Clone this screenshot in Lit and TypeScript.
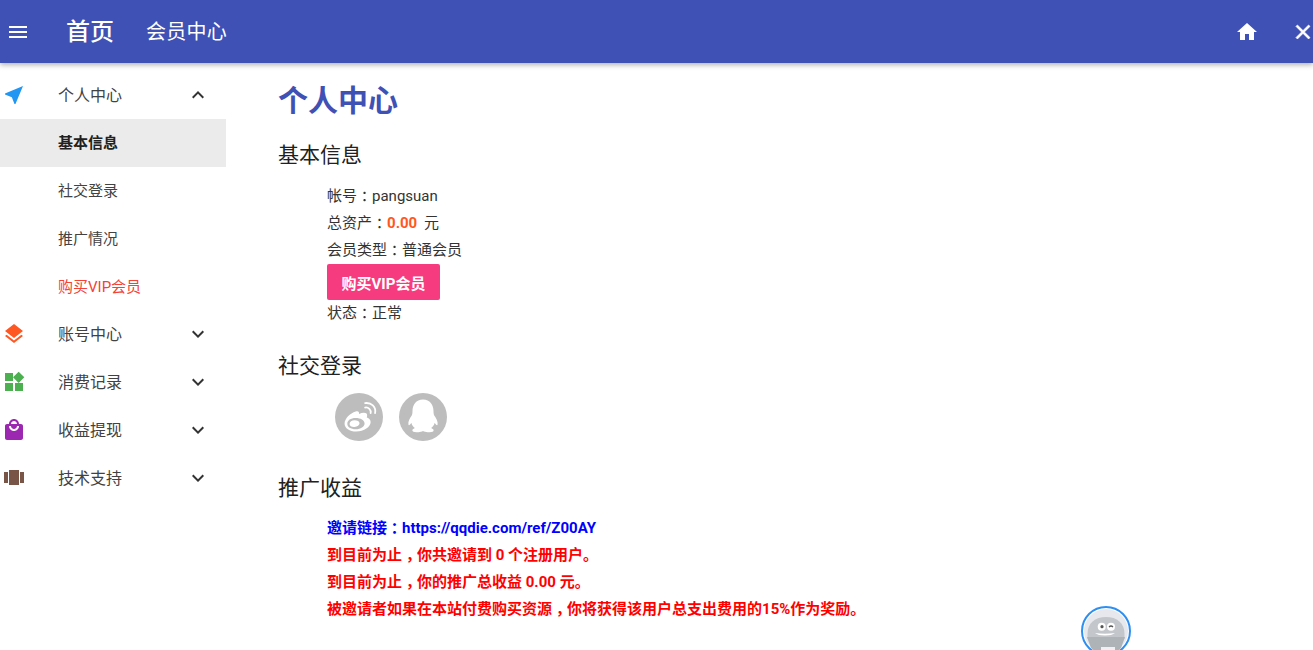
import { LitElement, html, css, svg } from "lit";
import { customElement } from "lit/decorators.js";

const chevDown = "M7.41 8.59 12 13.17l4.59-4.58L18 10l-6 6-6-6z";
const chevUp = "M7.41 15.41 12 10.83l4.59 4.58L18 14l-6-6-6 6z";

const groups = [
  { label: "账号中心", color: "#ff5722", d: "M11.99 18.54l-7.37-5.73L3 14.07l9 7 9-7-1.63-1.27zM12 16l7.36-5.73L21 9l-9-7-9 7 1.63 1.27z" },
  { label: "消费记录", color: "#4caf50", d: "M13 13v8h8v-8zM3 21h8v-8H3zM3 3v8h8V3zM16.66 1.69 11 7.34 16.66 13l5.66-5.66z" },
  { label: "收益提现", color: "#9c27b0", d: "M19 6h-2c0-2.76-2.24-5-5-5S7 3.24 7 6H5c-1.1 0-1.99.9-1.99 2L3 20c0 1.1.9 2 2 2h14c1.1 0 2-.9 2-2V8c0-1.1-.9-2-2-2zm-7-3c1.66 0 3 1.34 3 3H9c0-1.66 1.34-3 3-3zm0 10c-2.76 0-5-2.24-5-5h2c0 1.66 1.34 3 3 3s3-1.34 3-3h2c0 2.76-2.24 5-5 5z" },
  { label: "技术支持", color: "#795548", d: "M7 19h10V4H7v15zm-5-2h4V6H2v11zm16-11v11h4V6h-4z" },
];

function icon(d: string, fill: string, size = 24) {
  return html`<svg width=${size} height=${size} viewBox="0 0 24 24" fill=${fill}>${svg`<path d=${d}></path>`}</svg>`;
}

/* Full-width colon and comma sit centred across their em box in the reference. */
function t(text: string) {
  return text.split(/([：，])/).map((part) =>
    part === "：" || part === "，" ? html`<span class="p">${part}</span>` : part
  );
}

@customElement("app-root")
export class AppRoot extends LitElement {
  static styles = css`
    :host {
      display: block;
      height: 650px;
      overflow: hidden;
      position: relative;
      background: #fff;
      color: #212121;
      font-family: Roboto, "Noto Sans CJK SC", sans-serif;
      font-size: 15px;
    }
    .p { font-feature-settings: "halt"; margin: 0 0.25em; }
    .bar {
      height: 63px;
      background: #3f51b5;
      color: #fff;
      display: flex;
      align-items: center;
      box-shadow: 0 2px 5px rgba(0, 0, 0, 0.3);
      position: relative;
      padding-left: 6px;
    }
    .bar svg { display: block; }
    .title { font-size: 24px; margin-left: 36px; font-weight: 500; padding-bottom: 4px; }
    .sub { font-size: 20px; margin-left: 32px; padding-bottom: 2px; letter-spacing: 0.25px; }
    .spacer { flex: 1; }
    .home { margin-right: 32px; }
    .close { margin-right: -2px; }
    .close svg path { stroke: #fff; stroke-width: 0.7; }
    .body { display: flex; }
    .side { width: 226px; padding-top: 8px; flex: none; }
    .item {
      height: 48px;
      display: flex;
      align-items: center;
      padding-left: 2px;
      color: #424242;
      font-size: 16px;
    }
    .item svg { display: block; }
    .item .label { margin-left: 32px; flex: 1; padding-bottom: 3px; }
    .item .chev { margin-right: 16px; color: #333; }
    .sub-item {
      height: 48px;
      display: flex;
      align-items: center;
      padding: 0 0 3px 58px;
      box-sizing: border-box;
      font-size: 15px;
      color: #424242;
    }
    .sub-item.active { background: #ebebeb; color: #212121; font-weight: 700; }
    .sub-item.vip { color: #f44336; height: 47px; padding-bottom: 2px; }
    .main { padding-left: 52px; flex: 1; }
    h1 {
      margin: 18px 0 0;
      font-size: 30px;
      line-height: 40px;
      color: #3f51b5;
      font-weight: 700;
    }
    h2 {
      margin: 0;
      font-size: 21px;
      font-weight: 400;
      line-height: 28px;
      color: #212121;
    }
    .h-basic { margin-top: 20px; }
    .info { padding: 14px 0 0 49px; color: #333; }
    .line { line-height: 27px; height: 27px; }
    .money { color: #ff5722; font-weight: 700; font-size: 15px; margin: 0 3px 0 0; }
    .btn {
      display: flex;
      align-items: center;
      justify-content: center;
      width: 113px;
      height: 36px;
      background: #f73b7f;
      color: #fff;
      font-weight: 700;
      border-radius: 2px;
    }
    .h-social { margin-top: 25px; }
    .social { display: flex; gap: 16px; padding: 13px 0 0 57px; }
    .circle {
      width: 48px;
      height: 48px;
      border-radius: 50%;
      background: #bdbdbd;
      display: flex;
      align-items: center;
      justify-content: center;
    }
    .h-promo { margin-top: 33px; }
    .promo { padding: 13px 0 0 49px; font-weight: 700; color: #f00; }
    .promo .blue { color: #00f; }
    .mascot {
      position: absolute;
      left: 1081px;
      top: 606px;
      width: 50px;
      height: 50px;
    }
  `;

  render() {
    return html`
      <header class="bar">
        ${icon("M3 18h18v-2H3v2zm0-5h18v-2H3v2zm0-7v2h18V6H3z", "#fff")}
        <span class="title">首页</span>
        <span class="sub">会员中心</span>
        <span class="spacer"></span>
        <span class="home">${icon("M10 20v-6h4v6h5v-8h3L12 3 2 12h3v8z", "#fff")}</span>
        <span class="close">${icon("M19 6.41 17.59 5 12 10.59 6.41 5 5 6.41 10.59 12 5 17.59 6.41 19 12 13.41 17.59 19 19 17.59 13.41 12z", "#fff")}</span>
      </header>
      <div class="body">
        <nav class="side">
          <div class="item">
            ${icon("M21 3 3 10.53v.98l6.84 2.65L12.48 21h.98z", "#2196f3")}
            <span class="label">个人中心</span>
            <span class="chev">${icon(chevUp, "#333")}</span>
          </div>
          <div class="sub-item active">基本信息</div>
          <div class="sub-item">社交登录</div>
          <div class="sub-item">推广情况</div>
          <div class="sub-item vip">购买VIP会员</div>
          ${groups.map(
            (g) => html`<div class="item">
              ${icon(g.d, g.color)}
              <span class="label">${g.label}</span>
              <span class="chev">${icon(chevDown, "#333")}</span>
            </div>`
          )}
        </nav>
        <main class="main">
          <h1>个人中心</h1>
          <h2 class="h-basic">基本信息</h2>
          <div class="info">
            <div class="line">${t("帐号：pangsuan")}</div>
            <div class="line">${t("总资产：")}<span class="money">0.00</span> 元</div>
            <div class="line">${t("会员类型：普通会员")}</div>
            <div class="btn">购买VIP会员</div>
            <div class="line">${t("状态：正常")}</div>
          </div>
          <h2 class="h-social">社交登录</h2>
          <div class="social">
            <div class="circle">
              <svg width="40" height="40" viewBox="0 0 36 36" fill="#fff">
                <path fill-rule="evenodd" d="M15 13c-5 1.500-10 6.500-10 11 0 4 4.500 7 10.500 7 7 0 13-4 13-8.500 0-2.500-2-3.500-3.500-4 .5-1.500.5-3-.5-3.800-1.500-1-4-.5-6.500.5 .3-1.700-.5-3-3-2.200zM15 19c4.500 0 8 2 8 4.800 0 2.800-3.500 5.200-8 5.200s-7.500-2.200-7.500-5c0-2.800 3-5 7.500-5zM14 21c-2.500 0-4.500 1.500-4.500 3.300 0 1.700 2 2.900 4.500 2.700 2.500-.2 4.500-1.600 4.500-3.300 0-1.700-2-2.700-4.500-2.700z"></path>
                <path fill="none" stroke="#fff" stroke-width="1.600" stroke-linecap="round" d="M23.500 9.500c3-.5 5.500 2 5 5M23.500 5.500c5.500-.8 10 3.500 9 9"></path>
              </svg>
            </div>
            <div class="circle">
              <svg width="42" height="42" viewBox="0 0 36 36" fill="#fff">
                <path d="M18 3c-6 0-9 4.500-9 10 0 1.500-.2 3-.8 4-1.500 2-3.200 5-2.700 7.500.3 1.300 1.500 0 2.500-1.500.5 2 1.500 3.500 3 4.500-1.500.7-2.500 1.500-2 2.500.5 1 3 1 5 1 1.500 0 3-.5 4-1 1 .5 2.500 1 4 1 2 0 4.500 0 5-1 .5-1-.5-1.800-2-2.500 1.500-1 2.500-2.500 3-4.500 1 1.500 2.200 2.800 2.500 1.500.5-2.500-1.200-5.500-2.700-7.500-.6-1-.8-2.500-.8-4C27 7.500 24 3 18 3z"></path>
              </svg>
            </div>
          </div>
          <h2 class="h-promo">推广收益</h2>
          <div class="promo">
            <div class="line blue">${t("邀请链接：https://qqdie.com/ref/Z00AY")}</div>
            <div class="line">${t("到目前为止，你共邀请到 0 个注册用户。")}</div>
            <div class="line">${t("到目前为止，你的推广总收益 0.00 元。")}</div>
            <div class="line">${t("被邀请者如果在本站付费购买资源，你将获得该用户总支出费用的15%作为奖励。")}</div>
          </div>
        </main>
      </div>
      <svg class="mascot" viewBox="0 0 50 50">
        <circle cx="25" cy="25" r="24" fill="#fff" stroke="#2e8ff0" stroke-width="2"></circle>
        <circle cx="25" cy="25" r="22" fill="#e6e8ee"></circle>
        <path d="M6.500 33V28C6.500 17 14 11 25 11s18.500 6 18.500 17v5z" fill="#c3c6cb"></path>
        <path d="M6 31H44L40 42 34 47H16L10 42z" fill="#aeb3b7"></path>
        <path d="M20 41h14v6H20z" fill="#eef0f3"></path>
        <circle cx="20.700" cy="20.700" r="4" fill="#fff"></circle>
        <circle cx="30" cy="20.700" r="4" fill="#fff"></circle>
        <circle cx="21" cy="20.700" r="1.600" fill="#555"></circle>
        <path d="M28 21q2-2 4 0" stroke="#555" stroke-width="1.300" fill="none"></path>
        <path d="M14 27q10 1.500 20 0-3 2.500-10 2.500t-10-2.500z" fill="#fff"></path>
      </svg>
    `;
  }
}
